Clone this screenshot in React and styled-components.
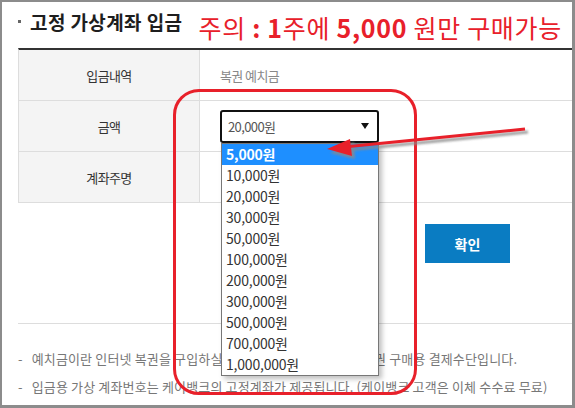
import React from 'react';
import styled, { createGlobalStyle } from 'styled-components';

const GlobalStyle = createGlobalStyle`
  html, body {
    margin: 0;
    padding: 0;
    background: #fff;
  }
  body {
    font-family: "Noto Sans CJK KR", "Noto Sans", sans-serif;
  }
`;

const amounts = [
  '5,000원',
  '10,000원',
  '20,000원',
  '30,000원',
  '50,000원',
  '100,000원',
  '200,000원',
  '300,000원',
  '500,000원',
  '700,000원',
  '1,000,000원',
];

const App = () => {
  return (
    <>
      <GlobalStyle />
      <Frame>
        <Header>
          <Title>고정 가상계좌 입금</Title>
          <Warning>
            주의 <b>: 1</b>주에 <b>5,000</b> 원만 구매가능
          </Warning>
        </Header>

        <Table>
          <Label>입금내역</Label>
          <Value muted>복권 예치금</Value>
          <Label>금액</Label>
          <Value>
            <SelectWrap>
              <SelectBox>
                <span>20,000원</span>
                <Caret />
              </SelectBox>
              <Options>
                {amounts.map((a, i) => (
                  <Option key={a} selected={i === 0}>{a}</Option>
                ))}
              </Options>
            </SelectWrap>
          </Value>
          <Label>계좌주명</Label>
          <Value />
        </Table>

        <ButtonRow>
          <ConfirmButton>확인</ConfirmButton>
        </ButtonRow>

        <Notes>
          <Note>예치금이란 인터넷 복권을 구입하실 수 있도록 미리 충전해 둔 복권 구매용 결제수단입니다.</Note>
          <Note>입금용 가상 계좌번호는 케이뱅크의 고정계좌가 제공됩니다. (케이뱅크 고객은 이체 수수료 무료)</Note>
        </Notes>

        <Highlight />
        <Arrow viewBox="0 0 571 404" width="571" height="404">
          <defs>
            <filter id="soft" x="-10%" y="-50%" width="120%" height="200%">
              <feGaussianBlur stdDeviation="1.2" />
            </filter>
          </defs>
          <g fill="#8a8a8a" stroke="#8a8a8a" filter="url(#soft)" opacity="0.8">
            <line x1="526" y1="130" x2="345" y2="148" strokeWidth="3.2" />
            <polygon points="328,151 352,140 353,157" stroke="none" />
          </g>
          <g fill="#e8202a" stroke="#e8202a">
            <line x1="523" y1="127" x2="342" y2="145" strokeWidth="3" />
            <polygon points="325,147 348,137 350,154" stroke="none" />
          </g>
        </Arrow>
      </Frame>
    </>
  );
};

const Frame = styled.div`
  position: relative;
  width: 575px;
  height: 408px;
  box-sizing: border-box;
  border: 2px solid #8c8c8c;
  border-right-width: 3px;
  border-bottom-width: 3px;
  background: #fff;
  overflow: hidden;
`;

const Header = styled.div`
  display: flex;
  align-items: flex-start;
  height: 46px;
  padding-left: 16px;
`;

const Title = styled.h2`
  display: flex;
  align-items: center;
  margin: 8px 0 0;
  font-size: 19px;
  font-weight: 700;
  line-height: 23px;
  color: #1e1e1e;
  letter-spacing: 0.4px;
  white-space: nowrap;

  &::before {
    content: '';
    width: 3px;
    height: 3px;
    background: #666;
    margin-right: 9px;
  }
`;

const Warning = styled.p`
  margin: 10px 0 0 16px;
  font-size: 25px;
  line-height: 30px;
  letter-spacing: 0.7px;
  color: #e8202a;
  white-space: nowrap;

  b {
    font-weight: 700;
  }
`;

const Table = styled.div`
  display: grid;
  grid-template-columns: 181px 1fr;
  grid-auto-rows: 51px;
  margin-left: 16px;
  border-top: 2px solid #333;
  border-left: 1px solid #ddd;
`;

const Cell = styled.div`
  display: flex;
  align-items: center;
  border-bottom: 1px solid #ddd;
  font-size: 13px;
  letter-spacing: -0.6px;
`;

const Label = styled(Cell)`
  justify-content: center;
  background: #f4f4f4;
  border-right: 1px solid #ddd;
  color: #333;
`;

const Value = styled(Cell)`
  padding-left: 20px;
  color: ${(p) => (p.muted ? '#888' : '#333')};
`;

const SelectWrap = styled.div`
  position: relative;
`;

const SelectBox = styled.div`
  display: flex;
  align-items: center;
  justify-content: space-between;
  box-sizing: border-box;
  width: 159px;
  height: 33px;
  padding: 0 8px 0 6px;
  border: 2px solid #111;
  border-radius: 3px;
  background: #fff;
  font-size: 13px;
  letter-spacing: -0.6px;
  color: #555;
`;

const Caret = styled.i`
  width: 0;
  height: 0;
  border-left: 4px solid transparent;
  border-right: 4px solid transparent;
  border-top: 6px solid #111;
`;

const Options = styled.ul`
  position: absolute;
  top: 33px;
  left: 1px;
  z-index: 2;
  box-sizing: border-box;
  width: 158px;
  margin: 0;
  padding: 0;
  list-style: none;
  background: #fff;
  border: 1px solid #777;
  box-shadow: 3px 3px 5px rgba(0, 0, 0, 0.25);
`;

const Option = styled.li`
  height: 21px;
  line-height: 21px;
  padding-left: 4px;
  font-size: 14px;
  letter-spacing: -0.2px;
  color: ${(p) => (p.selected ? '#fff' : '#333')};
  font-weight: ${(p) => (p.selected ? 700 : 400)};
  background: ${(p) => (p.selected ? '#1e8fff' : '#fff')};
`;

const ButtonRow = styled.div`
  display: flex;
  justify-content: flex-end;
  padding: 21px 62px 0 0;
  height: 121px;
  box-sizing: border-box;
  border-bottom: 1px solid #ddd;
  margin-left: 16px;
`;

const ConfirmButton = styled.button`
  width: 85px;
  height: 39px;
  border: 0;
  background: #0a7cc2;
  color: #fff;
  font-family: inherit;
  font-size: 14px;
  font-weight: 700;
`;

const Notes = styled.ul`
  margin: 0;
  padding: 21px 0 0 16px;
  list-style: none;
`;

const Note = styled.li`
  display: flex;
  gap: 9px;
  font-size: 13px;
  line-height: 28px;
  letter-spacing: 0.15px;
  color: #777;
  white-space: nowrap;

  &::before {
    content: '-';
  }
`;

const Highlight = styled.div`
  position: absolute;
  left: 171px;
  top: 87px;
  width: 244px;
  height: 306px;
  box-sizing: border-box;
  border: 3px solid #e8202a;
  border-radius: 26px;
  z-index: 3;
  pointer-events: none;
`;

const Arrow = styled.svg`
  position: absolute;
  left: 0;
  top: 0;
  z-index: 4;
  pointer-events: none;
`;

export default App;
